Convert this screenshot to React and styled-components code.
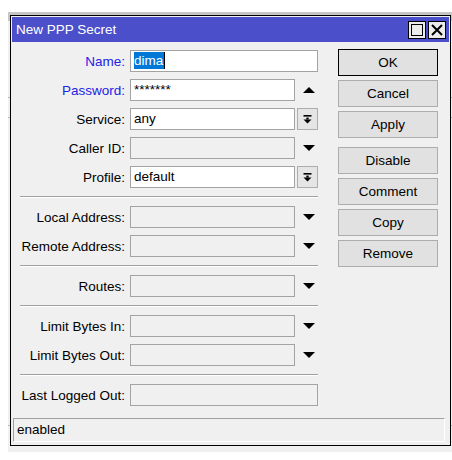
import styled, { createGlobalStyle } from "styled-components";

const GlobalStyle = createGlobalStyle`
  html, body {
    margin: 0;
    padding: 0;
    background: #fff;
    overflow: hidden;
  }
  body {
    font-family: "Liberation Sans", Arial, sans-serif;
    font-size: 13.5px;
    color: #000;
  }
`;

const sections = [
  [
    { label: "Name", value: "dima", selected: true, accent: true, full: true },
    { label: "Password", value: "*******", accent: true, trail: "up" },
    { label: "Service", value: "any", trail: "box" },
    { label: "Caller ID", disabled: true, trail: "down" },
    { label: "Profile", value: "default", trail: "box" },
  ],
  [
    { label: "Local Address", disabled: true, trail: "down" },
    { label: "Remote Address", disabled: true, trail: "down" },
  ],
  [{ label: "Routes", disabled: true, trail: "down" }],
  [
    { label: "Limit Bytes In", disabled: true, trail: "down" },
    { label: "Limit Bytes Out", disabled: true, trail: "down" },
  ],
  [{ label: "Last Logged Out", disabled: true, full: true }],
];

const buttons = [
  { text: "OK", primary: true },
  { text: "Cancel" },
  { text: "Apply" },
  { text: "Disable", spaced: true },
  { text: "Comment" },
  { text: "Copy" },
  { text: "Remove" },
];

const Triangle = ({ up }) => (
  <svg width="12" height="6" viewBox="0 0 12 6">
    <polygon points={up ? "0,6 12,6 6,0" : "0,0 12,0 6,6"} fill="#000" />
  </svg>
);

const DropIcon = () => (
  <svg width="9" height="9" viewBox="0 0 9 9">
    <rect x="0.5" y="0" width="8" height="1.6" fill="#000" />
    <rect x="3.3" y="2.6" width="2.4" height="2" fill="#000" />
    <polygon points="0.5,4.4 8.5,4.4 4.5,8.6" fill="#000" />
  </svg>
);

const Field = ({ field }) => (
  <Row>
    <Label $accent={field.accent}>{field.label}:</Label>
    <Input $full={field.full} $disabled={field.disabled}>
      {field.selected ? <Selected>{field.value}</Selected> : field.value}
    </Input>
    {field.trail === "box" && (
      <DropButton>
        <DropIcon />
      </DropButton>
    )}
    {(field.trail === "down" || field.trail === "up") && (
      <ArrowSlot>
        <Triangle up={field.trail === "up"} />
      </ArrowSlot>
    )}
  </Row>
);

const App = () => {
  return (
    <>
      <GlobalStyle />
      <Page>
        <Backdrop>
          <Dialog>
            <TitleBar>
              <Title>New PPP Secret</Title>
              <WinButtons>
                <WinButton>
                  <svg width="12" height="12" viewBox="0 0 12 12">
                    <rect x="0.5" y="0.5" width="11" height="11" fill="none" stroke="#000" strokeWidth="1" />
                  </svg>
                </WinButton>
                <WinButton>
                  <svg width="12" height="12" viewBox="0 0 12 12">
                    <path d="M1 1 L11 11 M11 1 L1 11" stroke="#000" strokeWidth="2" />
                  </svg>
                </WinButton>
              </WinButtons>
            </TitleBar>

            <Body>
              <Form>
                {sections.map((section, i) => (
                  <div key={i}>
                    {i > 0 && <Separator />}
                    <Section>
                      {section.map((field) => (
                        <Field key={field.label} field={field} />
                      ))}
                    </Section>
                  </div>
                ))}
              </Form>

              <ButtonColumn>
                {buttons.map((b) => (
                  <Button key={b.text} $primary={b.primary} $spaced={b.spaced}>
                    {b.text}
                  </Button>
                ))}
              </ButtonColumn>
            </Body>

            <StatusBar>enabled</StatusBar>
          </Dialog>
        </Backdrop>
      </Page>
    </>
  );
};

export default App;

const Page = styled.div`
  width: 452px;
  height: 460px;
  padding: 12px 0 0 8px;
  box-sizing: border-box;
`;

// the window behind the dialog: grey title strip, light body, a few table rules peeking out
const Backdrop = styled.div`
  width: 444px;
  height: 440px;
  padding: 3px 0 0 2px;
  box-sizing: border-box;
  background:
    linear-gradient(#c6c6c6 0 9px, transparent 9px),
    linear-gradient(transparent 85px, #b4b4b4 85px 86px, transparent 86px 105px, #b4b4b4 105px 106px, transparent 106px 413px, #b4b4b4 413px 414px, transparent 414px),
    #f0f0f0;
`;

const Dialog = styled.div`
  width: 441px;
  height: 431px;
  box-sizing: border-box;
  border: 1px solid #000;
  padding: 1px;
  background: #f0f0f0;
  display: flex;
  flex-direction: column;
`;

const TitleBar = styled.div`
  height: 25px;
  background: #4b4fc9;
  display: flex;
  align-items: center;
  justify-content: space-between;
  padding: 0 3px 0 4px;
`;

const Title = styled.span`
  color: #fff;
  font-size: 13.5px;
`;

const WinButtons = styled.div`
  display: flex;
  gap: 2px;
`;

const WinButton = styled.div`
  width: 18px;
  height: 18px;
  box-sizing: border-box;
  border: 1px solid #000;
  background: #ececec;
  display: flex;
  align-items: center;
  justify-content: center;
`;

const Body = styled.div`
  display: flex;
  gap: 20px;
  padding: 8px 10px 0 8px;
`;

const Form = styled.div`
  width: 298px;
  display: flex;
  flex-direction: column;
`;

const Section = styled.div`
  display: flex;
  flex-direction: column;
  gap: 7px;
`;

const Separator = styled.div`
  height: 0;
  border-top: 1px solid #a0a0a0;
  border-bottom: 1px solid #fff;
  margin: 8px 0 8px;
`;

const Row = styled.div`
  display: flex;
  align-items: center;
  height: 22px;
`;

const Label = styled.div`
  width: 105px;
  margin-right: 5px;
  text-align: right;
  white-space: nowrap;
  color: ${(p) => (p.$accent ? "#2222e6" : "#000")};
`;

const Input = styled.div`
  width: ${(p) => (p.$full ? "188px" : "165px")};
  height: 22px;
  box-sizing: border-box;
  border: 1px solid #a3a3a3;
  background: ${(p) => (p.$disabled ? "#f0f0f0" : "#fff")};
  padding: 0 3px;
  line-height: 20px;
  white-space: nowrap;
  overflow: hidden;
`;

const Selected = styled.span`
  background: #0078d7;
  color: #fff;
  padding: 1px 1px 1px 0;
  border-right: 1px solid #000;
`;

const ArrowSlot = styled.div`
  width: 23px;
  padding-left: 8px;
  box-sizing: border-box;
  display: flex;
  align-items: center;
`;

const DropButton = styled.div`
  width: 21px;
  height: 22px;
  margin-left: 2px;
  box-sizing: border-box;
  border: 1px solid #adadad;
  background: #e5e5e5;
  display: flex;
  align-items: center;
  justify-content: center;
`;

const ButtonColumn = styled.div`
  width: 100px;
  display: flex;
  flex-direction: column;
  gap: 4px;
  margin-top: -1px;
`;

const Button = styled.div`
  height: 27px;
  box-sizing: border-box;
  border: 1px solid ${(p) => (p.$primary ? "#000" : "#adadad")};
  background: #e1e1e1;
  display: flex;
  align-items: center;
  justify-content: center;
  margin-top: ${(p) => (p.$spaced ? "5px" : "0")};
`;

const StatusBar = styled.div`
  margin: auto 4px 2px 1px;
  height: 24px;
  box-sizing: border-box;
  border: 1px solid;
  border-color: #a0a0a0 #fff #fff #a0a0a0;
  padding-left: 3px;
  line-height: 22px;
`;
